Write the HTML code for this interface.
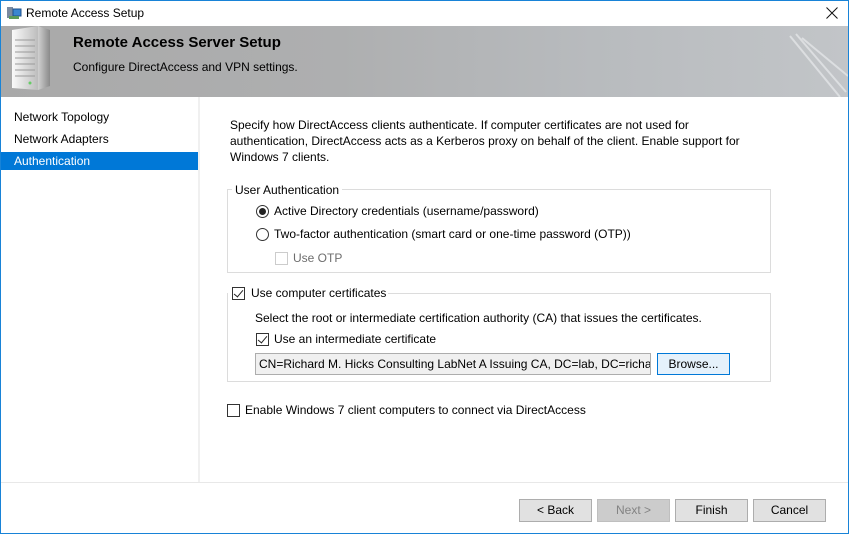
<!DOCTYPE html>
<html><head><style>
*{margin:0;padding:0;box-sizing:border-box}
body{width:849px;height:534px;overflow:hidden;background:#fff;font-family:"Liberation Sans",sans-serif;font-size:12px;color:#000;position:relative}
.a{position:absolute;white-space:nowrap}
.win{position:absolute;left:0;top:0;width:849px;height:534px;border:1px solid #1883d7}
.cb{position:absolute;width:13px;height:13px;border:1px solid #333;background:#fff}
.cb.on::after{content:"";position:absolute;left:3px;top:0px;width:4px;height:8px;border:solid #222;border-width:0 1.5px 1.5px 0;transform:rotate(40deg)}
.rb{position:absolute;width:13px;height:13px;border:1px solid #333;border-radius:50%;background:#fff}
.rb.on::after{content:"";position:absolute;left:2px;top:2px;width:7px;height:7px;border-radius:50%;background:#222}
.btn{position:absolute;top:499px;width:73px;height:23px;background:#e1e1e1;border:1px solid #adadad;text-align:center;line-height:21px}
</style></head><body>
<div class="win"></div>
<!-- title -->
<svg class="a" style="left:6px;top:5px" width="16" height="16"><rect x="1" y="2" width="6" height="11" fill="#7a8aa0"/><rect x="7" y="4" width="8" height="7" fill="#3a86d0" stroke="#1c4f8a"/><rect x="3" y="11" width="10" height="3" fill="#5a9a5a"/></svg>
<div class="a" style="left:26px;top:6px;font-size:12px">Remote Access Setup</div>
<svg class="a" style="left:826px;top:7px" width="12" height="12"><path d="M0.5 0.5 L11.5 11.5 M11.5 0.5 L0.5 11.5" stroke="#111" stroke-width="1"/></svg>
<!-- header -->
<div class="a" style="left:1px;top:26px;width:847px;height:71px;background:linear-gradient(90deg,#a9a9a9 0%,#aeafb0 40%,#b8bbbe 70%,#c2c5c8 100%)"></div>
<svg class="a" style="left:780px;top:26px" width="68" height="71"><path d="M10 10 L60 71 M16 8 L66 66 M22 12 L68 50" stroke="#e8eaec" stroke-width="2" opacity=".7"/></svg>
<svg class="a" style="left:10px;top:26px" width="44" height="66">
<defs><linearGradient id="f" x1="0" x2="1"><stop offset="0" stop-color="#fafafa"/><stop offset="1" stop-color="#bdbdbd"/></linearGradient>
<linearGradient id="s" x1="0" x2="1"><stop offset="0" stop-color="#d0d0d0"/><stop offset="1" stop-color="#8a8a8a"/></linearGradient></defs>
<polygon points="2,4 28,0 28,64 2,62" fill="url(#f)"/>
<polygon points="28,0 40,4 40,60 28,64" fill="url(#s)"/>
<g stroke="#9a9a9a" stroke-width="1"><path d="M5 14h20M5 20h20M5 26h20M5 32h20M5 38h20M5 44h20M5 50h20"/></g>
<circle cx="20" cy="57" r="1.5" fill="#6c6"/>
</svg>
<div class="a" style="left:73px;top:34px;font-size:15px;font-weight:bold">Remote Access Server Setup</div>
<div class="a" style="left:73px;top:60px">Configure DirectAccess and VPN settings.</div>
<!-- sidebar -->
<div class="a" style="left:198px;top:97px;width:2px;height:385px;background:#f0f0f0"></div>
<div class="a" style="left:14px;top:110px">Network Topology</div>
<div class="a" style="left:14px;top:132px">Network Adapters</div>
<div class="a" style="left:1px;top:152px;width:197px;height:18px;background:#0078d7"></div>
<div class="a" style="left:14px;top:154px;color:#fff">Authentication</div>
<!-- content -->
<div class="a" style="left:230px;top:117px;line-height:16px">Specify how DirectAccess clients authenticate. If computer certificates are not used for<br>authentication, DirectAccess acts as a Kerberos proxy on behalf of the client. Enable support for<br>Windows 7 clients.</div>
<div class="a" style="left:227px;top:189px;width:544px;height:84px;border:1px solid #dcdcdc"></div>
<div class="a" style="left:232px;top:183px;background:#fff;padding:0 3px">User Authentication</div>
<div class="rb on" style="left:256px;top:205px"></div>
<div class="a" style="left:274px;top:204px">Active Directory credentials (username/password)</div>
<div class="rb" style="left:256px;top:228px"></div>
<div class="a" style="left:274px;top:227px">Two-factor authentication (smart card or one-time password (OTP))</div>
<div class="cb" style="left:275px;top:252px;border-color:#ccc"></div>
<div class="a" style="left:293px;top:251px;color:#6d6d6d">Use OTP</div>
<div class="a" style="left:227px;top:293px;width:544px;height:89px;border:1px solid #dcdcdc"></div>
<div class="a" style="left:228px;top:285px;width:160px;height:16px;background:#fff"></div>
<div class="cb on" style="left:232px;top:287px"></div>
<div class="a" style="left:251px;top:286px">Use computer certificates</div>
<div class="a" style="left:255px;top:311px">Select the root or intermediate certification authority (CA) that issues the certificates.</div>
<div class="cb on" style="left:256px;top:333px"></div>
<div class="a" style="left:274px;top:332px">Use an intermediate certificate</div>
<div class="a" style="left:255px;top:353px;width:396px;height:22px;background:#f0f0f0;border:1px solid #adadad;overflow:hidden;padding:3px 0 0 3px">CN=Richard M. Hicks Consulting LabNet A Issuing CA, DC=lab, DC=richa</div>
<div class="a" style="left:657px;top:353px;width:73px;height:22px;background:#e5f1fb;border:1px solid #0078d7;text-align:center;line-height:20px">Browse...</div>
<div class="cb" style="left:227px;top:404px"></div>
<div class="a" style="left:245px;top:403px">Enable Windows 7 client computers to connect via DirectAccess</div>
<!-- footer -->
<div class="a" style="left:1px;top:482px;width:847px;height:1px;background:#e8e8e8"></div>
<div class="btn" style="left:519px">&lt; Back</div>
<div class="btn" style="left:597px;background:#cccccc;border-color:#bfbfbf;color:#838383">Next &gt;</div>
<div class="btn" style="left:675px">Finish</div>
<div class="btn" style="left:753px">Cancel</div>
</body></html>
